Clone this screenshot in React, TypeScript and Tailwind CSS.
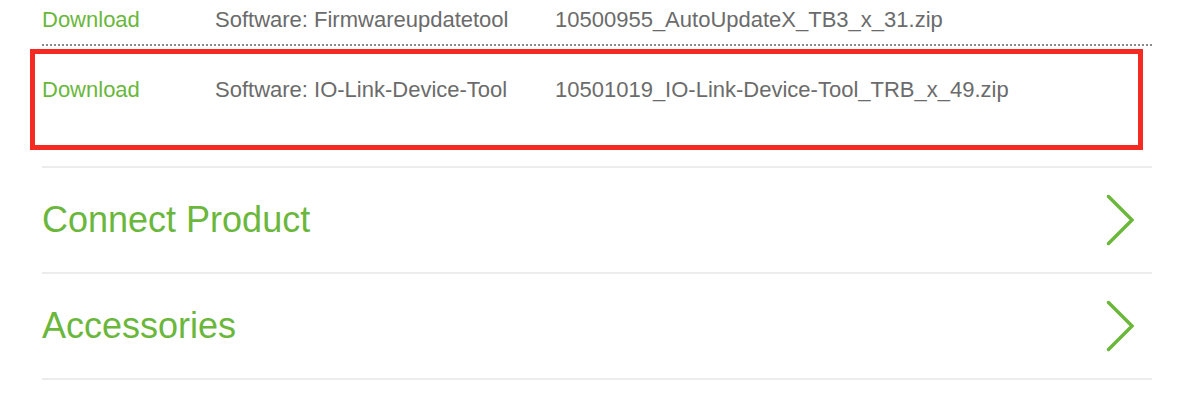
import React from "react";

const green = "text-[#6ab73c]";

function Chevron() {
  return (
    <svg width="28" height="52" viewBox="0 0 28 52" fill="none" className="mr-[18px]">
      <polyline
        points="2.5,2.5 26,26 2.5,49.5"
        stroke="#6ab73c"
        strokeWidth="3.4"
        strokeLinecap="round"
        strokeLinejoin="miter"
      />
    </svg>
  );
}

function FileRow({ soft, file, className }: { soft: string; file: string; className: string }) {
  return (
    <div className={`grid grid-cols-[173px_340px_1fr] text-[22px] leading-[26px] ${className}`}>
      <span className={green}>Download</span>
      <span className="text-[#6b6b6b]">{soft}</span>
      <span className="text-[#6b6b6b]">{file}</span>
    </div>
  );
}

export default function App() {
  return (
    <div
      className="w-[1200px] h-[408px] bg-white overflow-hidden"
      style={{ fontFamily: '"Liberation Sans", Arial, Helvetica, sans-serif' }}
    >
      <div className="ml-[42px] w-[1110px]">
        <FileRow
          soft="Software: Firmwareupdatetool"
          file="10500955_AutoUpdateX_TB3_x_31.zip"
          className="pt-[7px] pb-[11px] border-b-2 border-dotted border-[#8a8a8a]"
        />
        <div className="relative">
          <FileRow
            soft="Software: IO-Link-Device-Tool"
            file="10501019_IO-Link-Device-Tool_TRB_x_49.zip"
            className="pt-[31px] pb-[63px]"
          />
          <div className="absolute left-[-12px] top-[3px] w-[1113px] h-[101px] border-[5px] border-[#f52a22]" />
        </div>
        <div className="border-t-2 border-[#ececec]">
          <div className="flex items-center justify-between h-[106px] border-b-2 border-[#ececec]">
            <span className={`${green} text-[36px] leading-[42px]`}>Connect Product</span>
            <Chevron />
          </div>
          <div className="flex items-center justify-between h-[106px] border-b-2 border-[#ececec]">
            <span className={`${green} text-[36px] leading-[42px]`}>Accessories</span>
            <Chevron />
          </div>
        </div>
      </div>
    </div>
  );
}
